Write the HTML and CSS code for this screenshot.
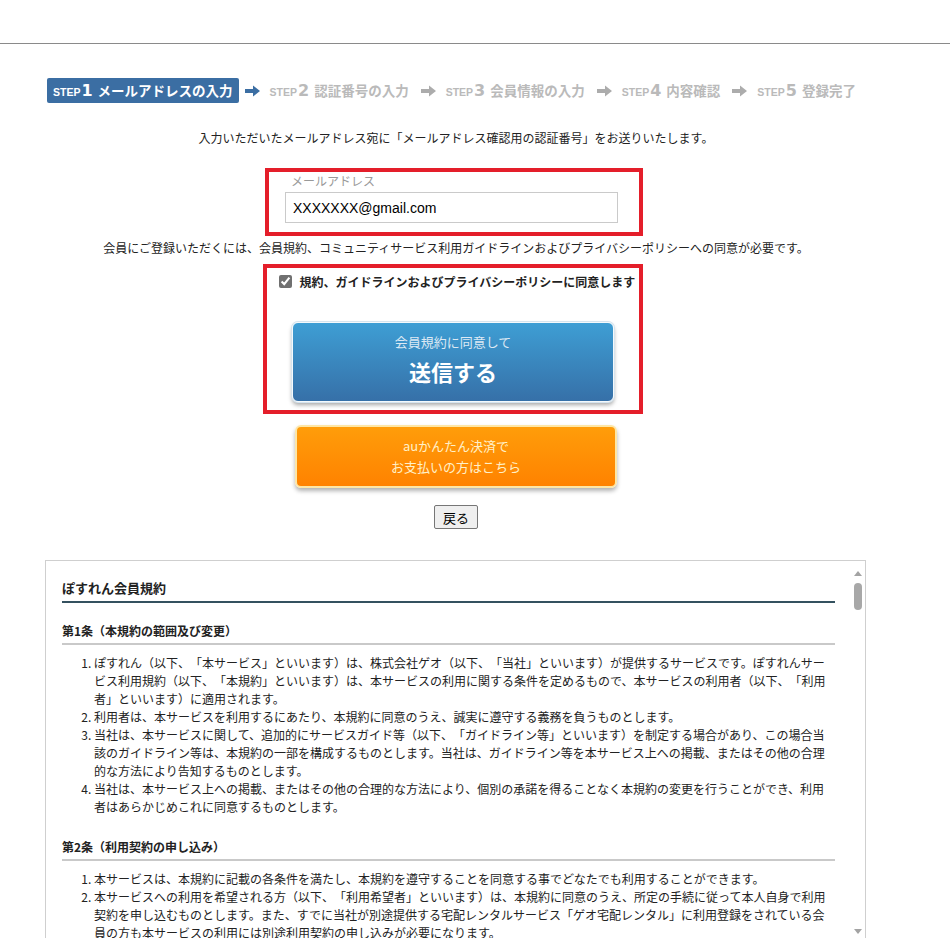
FILE: index.html
```html
<!DOCTYPE html>
<html lang="ja">
<head>
  <meta charset="UTF-8">
  <title>会員登録 - メールアドレスの入力</title>
  <meta name="viewport" content="width=device-width, initial-scale=1.0">
  <link rel="stylesheet" href="styles.css">
</head>
<body>
  <header class="top-bar"></header>

  <div class="page">
    <!-- Registration steps -->
    <div class="steps">
      <div class="step current"><span class="step-label">STEP</span><span class="step-num">1</span>メールアドレスの入力</div>
      <svg class="arrow current" viewBox="0 0 17 14"><path d="M1 5h8V1.5l7 5.5-7 5.5V9H1z"/></svg>
      <div class="step"><span class="step-label">STEP</span><span class="step-num">2</span>認証番号の入力</div>
      <svg class="arrow" viewBox="0 0 17 14"><path d="M1 5h8V1.5l7 5.5-7 5.5V9H1z"/></svg>
      <div class="step"><span class="step-label">STEP</span><span class="step-num">3</span>会員情報の入力</div>
      <svg class="arrow" viewBox="0 0 17 14"><path d="M1 5h8V1.5l7 5.5-7 5.5V9H1z"/></svg>
      <div class="step"><span class="step-label">STEP</span><span class="step-num">4</span>内容確認</div>
      <svg class="arrow" viewBox="0 0 17 14"><path d="M1 5h8V1.5l7 5.5-7 5.5V9H1z"/></svg>
      <div class="step"><span class="step-label">STEP</span><span class="step-num">5</span>登録完了</div>
    </div>

    <p class="lead">入力いただいたメールアドレス宛に「メールアドレス確認用の認証番号」をお送りいたします。</p>

    <!-- Email input (marked in red) -->
    <div class="mark mark-email">
      <label class="field-label" for="email">メールアドレス</label>
      <input type="text" id="email" class="email-input" value="XXXXXXX@gmail.com">
    </div>

    <p class="consent">会員にご登録いただくには、会員規約、コミュニティサービス利用ガイドラインおよびプライバシーポリシーへの同意が必要です。</p>

    <!-- Agreement + submit (marked in red) -->
    <div class="mark mark-agree">
      <label class="agree-row">
        <input type="checkbox" checked>
        <span>規約、ガイドラインおよびプライバシーポリシーに同意します</span>
      </label>
      <button class="btn-submit">
        <span class="btn-sub">会員規約に同意して</span>
        <span class="btn-main">送信する</span>
      </button>
    </div>

    <button class="btn-au">auかんたん決済で<br>お支払いの方はこちら</button>

    <button class="btn-back">戻る</button>

    <!-- Terms of service -->
    <div class="terms">
      <div class="terms-body">
        <h2 class="terms-title">ぽすれん会員規約</h2>

        <h3 class="article">第1条（本規約の範囲及び変更）</h3>
        <ol class="article-list">
          <li>ぽすれん（以下、「本サービス」といいます）は、株式会社ゲオ（以下、「当社」といいます）が提供するサービスです。ぽすれんサービス利用規約（以下、「本規約」といいます）は、本サービスの利用に関する条件を定めるもので、本サービスの利用者（以下、「利用者」といいます）に適用されます。</li>
          <li>利用者は、本サービスを利用するにあたり、本規約に同意のうえ、誠実に遵守する義務を負うものとします。</li>
          <li>当社は、本サービスに関して、追加的にサービスガイド等（以下、「ガイドライン等」といいます）を制定する場合があり、この場合当該のガイドライン等は、本規約の一部を構成するものとします。当社は、ガイドライン等を本サービス上への掲載、またはその他の合理的な方法により告知するものとします。</li>
          <li>当社は、本サービス上への掲載、またはその他の合理的な方法により、個別の承諾を得ることなく本規約の変更を行うことができ、利用者はあらかじめこれに同意するものとします。</li>
        </ol>

        <h3 class="article">第2条（利用契約の申し込み）</h3>
        <ol class="article-list">
          <li>本サービスは、本規約に記載の各条件を満たし、本規約を遵守することを同意する事でどなたでも利用することができます。</li>
          <li>本サービスへの利用を希望される方（以下、「利用希望者」といいます）は、本規約に同意のうえ、所定の手続に従って本人自身で利用契約を申し込むものとします。また、すでに当社が別途提供する宅配レンタルサービス「ゲオ宅配レンタル」に利用登録をされている会員の方も本サービスの利用には別途利用契約の申し込みが必要になります。</li>
        </ol>
      </div>
      <div class="scrollbar">
        <span class="scroll-up"></span>
        <span class="scroll-thumb"></span>
        <span class="scroll-space"></span>
        <span class="scroll-down"></span>
      </div>
    </div>
  </div>
</body>
</html>
```

FILE: styles.css
```css
/* Registration page - step 1 */
html, body {
  overflow: hidden;
}
body {
  margin: 0;
  font-family: "Noto Sans CJK JP", "Noto Sans", sans-serif;
  font-size: 12px;
  color: #222;
  background-color: #fff;
  text-spacing-trim: space-all;
}
.top-bar {
  height: 43px;
  border-bottom: 1px solid #8a8a8a;
}
.page {
  width: 822px;
  margin-left: 45px;
  padding-top: 34px;
}

/* steps */
.steps {
  display: flex;
  align-items: center;
  height: 25px;
  margin-left: 2px;
}
.step {
  display: flex;
  align-items: baseline;
  height: 25px;
  line-height: 25px;
  padding: 0 6px;
  font-size: 13.5px;
  font-weight: bold;
  color: #bababa;
  white-space: nowrap;
}
.step.current {
  background-color: #3b6ea3;
  color: #fff;
  border-radius: 2px;
}
.step-label {
  font-family: "Liberation Sans", Arial, sans-serif;
  font-size: 10.5px;
}
.step-num {
  font-family: "DejaVu Sans", sans-serif;
  font-size: 16px;
  margin: 0 5px 0 1px;
}
.arrow {
  width: 17px;
  height: 14px;
  fill: #acacac;
  margin: 0 3px 0 5px;
}
.arrow.current {
  fill: #3b6ea3;
}

.lead {
  margin: 26px 0 0;
  line-height: 18px;
  text-align: center;
}

/* red annotation frames */
.mark {
  box-sizing: border-box;
  border: 4px solid #e41e2a;
}
.mark-email {
  width: 378px;
  height: 68px;
  margin: 21px 0 0 220px;
  padding: 2px 0 0 16px;
}
.field-label {
  display: block;
  padding-left: 6px;
  line-height: 14px;
  color: #999;
}
.email-input {
  display: block;
  box-sizing: border-box;
  width: 333px;
  height: 31px;
  margin-top: 4px;
  padding: 0 7px;
  border: 1px solid #cacaca;
  font-family: "Liberation Sans", Arial, sans-serif;
  font-size: 14px;
  color: #000;
}

.consent {
  margin: 3px 0 0;
  line-height: 18px;
  text-align: center;
}

.mark-agree {
  width: 380px;
  height: 150px;
  margin: 7px 0 0 218px;
  padding-top: 4px;
}
.agree-row {
  display: flex;
  align-items: center;
  justify-content: center;
  gap: 8px;
  height: 18px;
  padding-left: 8px;
  font-size: 12px;
  font-weight: bold;
  white-space: nowrap;
}
.agree-row input {
  width: 13px;
  height: 13px;
  margin: 0;
  accent-color: #707070;
}

.btn-submit,
.btn-au {
  display: flex;
  flex-direction: column;
  align-items: center;
  justify-content: center;
  box-sizing: border-box;
  width: 322px;
  margin: 0 auto;
  border-radius: 6px;
  font-family: "Noto Sans CJK JP", sans-serif;
  cursor: pointer;
}
.btn-submit {
  height: 80px;
  margin-top: 32px;
  padding: 0;
  justify-content: flex-start;
  background: linear-gradient(#3e9ed4, #3670a8);
  border: 1px solid #f4f9fc;
  box-shadow: 0 0 0 1px #d6e4ee, 0 3px 4px rgba(0, 0, 0, 0.35);
}
.btn-sub {
  margin-top: 10px;
  line-height: 18px;
  font-size: 13px;
  color: #dce9f4;
}
.btn-main {
  margin-top: 5px;
  line-height: 30px;
  font-size: 22px;
  font-weight: bold;
  color: #fff;
}
.btn-au {
  height: 63px;
  margin-top: 11px;
  padding-bottom: 3px;
  background: linear-gradient(#ff9d0a, #ff8200);
  border: 2px solid #fde6a6;
  box-shadow: 0 3px 4px rgba(0, 0, 0, 0.3);
  font-size: 13px;
  line-height: 21px;
  color: #fff0c8;
}

.btn-back {
  display: block;
  height: 24px;
  margin: 17px auto 0;
  padding: 0 8px;
  border: 1px solid #767676;
  border-radius: 2px;
  background-color: #efefef;
  font-family: "Noto Sans CJK JP", sans-serif;
  font-size: 13px;
  color: #000;
}

/* terms box */
.terms {
  display: flex;
  box-sizing: border-box;
  width: 821px;
  height: 385px;
  margin-top: 31px;
  border: 1px solid #cfcfcf;
  overflow: hidden;
}
.terms-body {
  flex: 1;
  padding: 18px 15px 0 16px;
  overflow: hidden;
}
.terms-title {
  margin: 0;
  padding-bottom: 4px;
  border-bottom: 2px solid #34515f;
  font-size: 13px;
  line-height: 18px;
}
.article {
  margin: 19px 0 0;
  padding-bottom: 3px;
  border-bottom: 2px solid #c9c9c9;
  font-size: 12px;
  line-height: 18px;
}
.article-list {
  margin: 9px 0 0;
  padding-left: 32px;
  line-height: 18px;
}
.article-list + .article {
  margin-top: 22px;
}
.scrollbar {
  display: flex;
  flex-direction: column;
  align-items: center;
  width: 15px;
  padding: 10px 0 0;
}
.scroll-up,
.scroll-down {
  width: 0;
  height: 0;
  border-left: 4px solid transparent;
  border-right: 4px solid transparent;
}
.scroll-up {
  border-bottom: 5px solid #a3a3a3;
}
.scroll-down {
  border-top: 5px solid #a3a3a3;
}
.scroll-thumb {
  width: 8px;
  height: 27px;
  margin-top: 7px;
  border-radius: 4px;
  background-color: #a8a8a8;
}
.scroll-space {
  height: 319px;
}
```
